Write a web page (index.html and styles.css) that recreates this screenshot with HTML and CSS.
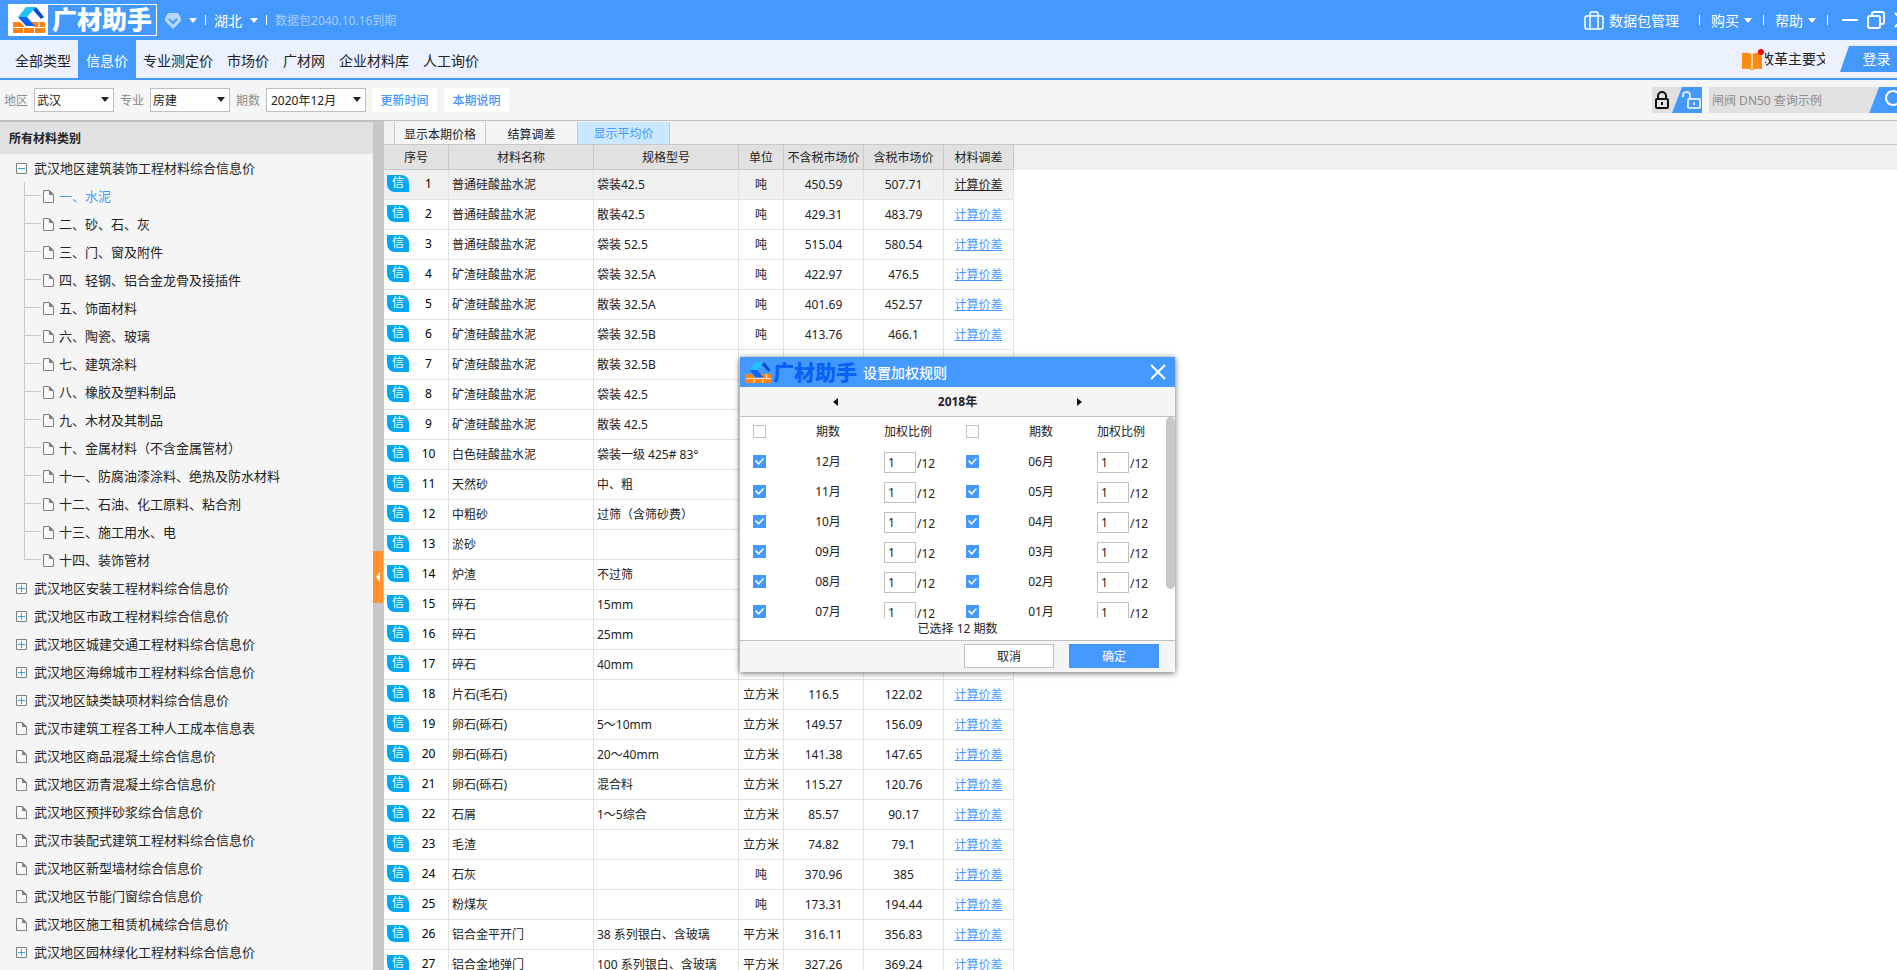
FILE: index.html
```html
<!DOCTYPE html>
<html lang="zh-CN">
<head>
<meta charset="utf-8">
<title>广材助手</title>
<link rel="stylesheet" href="styles.css">
</head>
<body>
<svg class="defs" width="0" height="0" aria-hidden="true">
  <symbol id="mark" viewBox="0 0 32 26">
    <path d="M0 15h7l5 5h9l-3-5h14v11H0z" fill="#ff8213"/>
    <path d="M0 20.500h32M10.500 21v5M21.500 21v5M26 15v5" stroke="#fff" stroke-width="1"/>
    <path d="M13 0h10l-9 10H5z" fill="#22c3fb"/>
    <path d="M5 10h9l8 9h-9z" fill="#0a62f5"/>
    <path d="M23 0l8 10-3 2-8-9z" fill="#0650c8"/>
  </symbol>
  <symbol id="file" viewBox="0 0 11 13">
    <path d="M.5.5h6l4 4v8H.5z" fill="#f8f8f8" stroke="#808080"/>
    <path d="M6.500.5v4h4z" fill="#808080" stroke="#808080"/>
  </symbol>
  <symbol id="plus" viewBox="0 0 11 11">
    <path d="M.5.5h10v10H.5z" fill="#fafafa" stroke="#808080"/>
    <path d="M2 5.500h7M5.500 2v7" stroke="#2ba7d8"/>
  </symbol>
  <symbol id="minus" viewBox="0 0 11 11">
    <path d="M.5.5h10v10H.5z" fill="#fafafa" stroke="#808080"/>
    <path d="M2 5.500h7" stroke="#2ba7d8"/>
  </symbol>
</svg>

<header class="titlebar">
  <div class="brand">
    <span class="brand-mark"><svg width="32" height="26"><use href="#mark"/></svg></span>
    <span class="brand-name">广材助手</span>
  </div>
  <button class="bar-btn" aria-label="会员"><svg width="16" height="16" viewBox="0 0 16 16"><path d="M3 0h10l3 5v3l-8 8-8-8V5z" fill="#b4d6ff"/><path d="M4 6l4 4 4-4" fill="none" stroke="#4499ff" stroke-width="2"/></svg><i class="caret"></i></button>
  <i class="bar-sep"></i>
  <button class="bar-btn">湖北<i class="caret"></i></button>
  <i class="bar-sep"></i>
  <span class="expiry">数据包2040.10.16到期</span>
  <div class="bar-right">
    <button class="bar-btn manage"><svg width="20" height="19" viewBox="0 0 20 19" fill="none" stroke="#fff" stroke-width="1.500"><rect x="1" y="5" width="18" height="13" rx="2"/><path d="M6 18V2.500Q6 1 7.500 1h5Q14 1 14 2.500V18"/></svg>数据包管理</button>
    <i class="bar-sep"></i>
    <button class="bar-btn">购买<i class="caret"></i></button>
    <i class="bar-sep"></i>
    <button class="bar-btn">帮助<i class="caret"></i></button>
    <i class="bar-sep"></i>
    <div class="window-btns">
      <button aria-label="最小化"><svg width="16" height="18" viewBox="0 0 16 18"><path d="M0 9h16" stroke="#fff" stroke-width="2"/></svg></button>
      <button aria-label="还原"><svg width="18" height="18" viewBox="0 0 18 18" fill="none" stroke="#fff" stroke-width="2"><rect x="1" y="5" width="12" height="12" rx="2"/><path d="M5 5V3q0-2 2-2h8q2 0 2 2v8q0 2-2 2h-2"/></svg></button>
      <button aria-label="关闭"><svg width="16" height="18" viewBox="0 0 16 18"><path d="M1 2l14 14M15 2L1 16" stroke="#fff" stroke-width="2"/></svg></button>
    </div>
  </div>
</header>

<nav class="nav">
  <a href="#">全部类型</a>
  <a href="#" class="active">信息价</a>
  <a href="#">专业测定价</a>
  <a href="#">市场价</a>
  <a href="#">广材网</a>
  <a href="#">企业材料库</a>
  <a href="#">人工询价</a>
  <div class="nav-right">
    <a href="#" class="news"><svg width="23" height="21" viewBox="0 0 23 21"><path d="M0 4q5-1 10 1 5-2 10-1v16q-5-1-10 1-5-2-10-1z" fill="#ff8a10"/><path d="M10 5v15" stroke="#ffd9ae" stroke-width="2"/><circle cx="19" cy="3" r="3" fill="#f00"/></svg><span class="news-text">改革主要文</span></a>
    <button class="login">登录</button>
  </div>
</nav>

<div class="filters">
  <label for="area">地区</label>
  <span class="pick"><select id="area"><option>武汉</option></select></span>
  <label for="major">专业</label>
  <span class="pick"><select id="major"><option>房建</option></select></span>
  <label for="period">期数</label>
  <span class="pick wide"><select id="period"><option>2020年12月</option></select></span>
  <button class="filter-btn">更新时间</button>
  <button class="filter-btn">本期说明</button>
  <div class="search-area">
    <div class="locks">
      <button aria-label="锁定"><svg width="16" height="18" viewBox="0 0 16 18" fill="none" stroke="#111" stroke-width="2"><rect x="2" y="8" width="12" height="9" rx="1"/><path d="M4 8V5a4 4 0 0 1 8 0v3M8 11v3"/></svg></button>
      <button class="unlock" aria-label="解锁"><svg width="19" height="18" viewBox="0 0 19 18" fill="none" stroke="#d8e9ff" stroke-width="2"><rect x="6" y="8" width="12" height="9" rx="1"/><path d="M1 6V4a3.500 3 0 0 1 7 0v4M12 11v3"/></svg></button>
    </div>
    <input class="search" type="text" placeholder="闸阀 DN50 查询示例" aria-label="搜索">
    <button class="search-btn" aria-label="查询"><svg width="20" height="20" viewBox="0 0 20 20" fill="none" stroke="#fff" stroke-width="2"><circle cx="8" cy="8" r="7"/><path d="M13 13l6 6"/></svg></button>
  </div>
</div>

<main class="workspace">
  <aside class="sidebar">
    <h2>所有材料类别</h2>
    <ul class="tree">
      <li><a href="#"><svg width="11" height="11"><use href="#minus"/></svg>武汉地区建筑装饰工程材料综合信息价</a>
        <ul class="branch">
          <li><a href="#" class="current"><svg width="11" height="13"><use href="#file"/></svg>一、水泥</a></li>
          <li><a href="#"><svg width="11" height="13"><use href="#file"/></svg>二、砂、石、灰</a></li>
          <li><a href="#"><svg width="11" height="13"><use href="#file"/></svg>三、门、窗及附件</a></li>
          <li><a href="#"><svg width="11" height="13"><use href="#file"/></svg>四、轻钢、铝合金龙骨及接插件</a></li>
          <li><a href="#"><svg width="11" height="13"><use href="#file"/></svg>五、饰面材料</a></li>
          <li><a href="#"><svg width="11" height="13"><use href="#file"/></svg>六、陶瓷、玻璃</a></li>
          <li><a href="#"><svg width="11" height="13"><use href="#file"/></svg>七、建筑涂料</a></li>
          <li><a href="#"><svg width="11" height="13"><use href="#file"/></svg>八、橡胶及塑料制品</a></li>
          <li><a href="#"><svg width="11" height="13"><use href="#file"/></svg>九、木材及其制品</a></li>
          <li><a href="#"><svg width="11" height="13"><use href="#file"/></svg>十、金属材料（不含金属管材）</a></li>
          <li><a href="#"><svg width="11" height="13"><use href="#file"/></svg>十一、防腐油漆涂料、绝热及防水材料</a></li>
          <li><a href="#"><svg width="11" height="13"><use href="#file"/></svg>十二、石油、化工原料、粘合剂</a></li>
          <li><a href="#"><svg width="11" height="13"><use href="#file"/></svg>十三、施工用水、电</a></li>
          <li><a href="#"><svg width="11" height="13"><use href="#file"/></svg>十四、装饰管材</a></li>
        </ul>
      </li>
      <li><a href="#"><svg width="11" height="11"><use href="#plus"/></svg>武汉地区安装工程材料综合信息价</a></li>
      <li><a href="#"><svg width="11" height="11"><use href="#plus"/></svg>武汉地区市政工程材料综合信息价</a></li>
      <li><a href="#"><svg width="11" height="11"><use href="#plus"/></svg>武汉地区城建交通工程材料综合信息价</a></li>
      <li><a href="#"><svg width="11" height="11"><use href="#plus"/></svg>武汉地区海绵城市工程材料综合信息价</a></li>
      <li><a href="#"><svg width="11" height="11"><use href="#plus"/></svg>武汉地区缺类缺项材料综合信息价</a></li>
      <li><a href="#"><svg width="11" height="13"><use href="#file"/></svg>武汉市建筑工程各工种人工成本信息表</a></li>
      <li><a href="#"><svg width="11" height="13"><use href="#file"/></svg>武汉地区商品混凝土综合信息价</a></li>
      <li><a href="#"><svg width="11" height="13"><use href="#file"/></svg>武汉地区沥青混凝土综合信息价</a></li>
      <li><a href="#"><svg width="11" height="13"><use href="#file"/></svg>武汉地区预拌砂浆综合信息价</a></li>
      <li><a href="#"><svg width="11" height="13"><use href="#file"/></svg>武汉市装配式建筑工程材料综合信息价</a></li>
      <li><a href="#"><svg width="11" height="13"><use href="#file"/></svg>武汉地区新型墙材综合信息价</a></li>
      <li><a href="#"><svg width="11" height="13"><use href="#file"/></svg>武汉地区节能门窗综合信息价</a></li>
      <li><a href="#"><svg width="11" height="13"><use href="#file"/></svg>武汉地区施工租赁机械综合信息价</a></li>
      <li><a href="#"><svg width="11" height="11"><use href="#plus"/></svg>武汉地区园林绿化工程材料综合信息价</a></li>
    </ul>
  </aside>
  <div class="splitter"><button class="collapse" aria-label="收起"></button></div>

  <section class="content">
    <div class="tabs">
      <button>显示本期价格</button>
      <button>结算调差</button>
      <button class="active">显示平均价</button>
    </div>
    <div class="grid-area">
    <table class="prices">
      <colgroup><col class="c-no"><col class="c-name"><col class="c-spec"><col class="c-unit"><col class="c-price"><col class="c-price"><col class="c-diff"></colgroup>
      <thead><tr><th>序号</th><th>材料名称</th><th>规格型号</th><th>单位</th><th>不含税市场价</th><th>含税市场价</th><th>材料调差</th></tr></thead>
      <tbody>
        <tr class="selected"><td><div class="no"><b>信</b><span>1</span></div></td><td>普通硅酸盐水泥</td><td>袋装42.5</td><td>吨</td><td>450.59</td><td>507.71</td><td><a href="#">计算价差</a></td></tr>
        <tr><td><div class="no"><b>信</b><span>2</span></div></td><td>普通硅酸盐水泥</td><td>散装42.5</td><td>吨</td><td>429.31</td><td>483.79</td><td><a href="#">计算价差</a></td></tr>
        <tr><td><div class="no"><b>信</b><span>3</span></div></td><td>普通硅酸盐水泥</td><td>袋装 52.5</td><td>吨</td><td>515.04</td><td>580.54</td><td><a href="#">计算价差</a></td></tr>
        <tr><td><div class="no"><b>信</b><span>4</span></div></td><td>矿渣硅酸盐水泥</td><td>袋装 32.5A</td><td>吨</td><td>422.97</td><td>476.5</td><td><a href="#">计算价差</a></td></tr>
        <tr><td><div class="no"><b>信</b><span>5</span></div></td><td>矿渣硅酸盐水泥</td><td>散装 32.5A</td><td>吨</td><td>401.69</td><td>452.57</td><td><a href="#">计算价差</a></td></tr>
        <tr><td><div class="no"><b>信</b><span>6</span></div></td><td>矿渣硅酸盐水泥</td><td>袋装 32.5B</td><td>吨</td><td>413.76</td><td>466.1</td><td><a href="#">计算价差</a></td></tr>
        <tr><td><div class="no"><b>信</b><span>7</span></div></td><td>矿渣硅酸盐水泥</td><td>散装 32.5B</td><td></td><td></td><td></td><td></td></tr>
        <tr><td><div class="no"><b>信</b><span>8</span></div></td><td>矿渣硅酸盐水泥</td><td>袋装 42.5</td><td></td><td></td><td></td><td></td></tr>
        <tr><td><div class="no"><b>信</b><span>9</span></div></td><td>矿渣硅酸盐水泥</td><td>散装 42.5</td><td></td><td></td><td></td><td></td></tr>
        <tr><td><div class="no"><b>信</b><span>10</span></div></td><td>白色硅酸盐水泥</td><td>袋装一级 425# 83°</td><td></td><td></td><td></td><td></td></tr>
        <tr><td><div class="no"><b>信</b><span>11</span></div></td><td>天然砂</td><td>中、粗</td><td></td><td></td><td></td><td></td></tr>
        <tr><td><div class="no"><b>信</b><span>12</span></div></td><td>中粗砂</td><td>过筛（含筛砂费）</td><td></td><td></td><td></td><td></td></tr>
        <tr><td><div class="no"><b>信</b><span>13</span></div></td><td>淤砂</td><td></td><td></td><td></td><td></td><td></td></tr>
        <tr><td><div class="no"><b>信</b><span>14</span></div></td><td>炉渣</td><td>不过筛</td><td></td><td></td><td></td><td></td></tr>
        <tr><td><div class="no"><b>信</b><span>15</span></div></td><td>碎石</td><td>15mm</td><td></td><td></td><td></td><td></td></tr>
        <tr><td><div class="no"><b>信</b><span>16</span></div></td><td>碎石</td><td>25mm</td><td></td><td></td><td></td><td></td></tr>
        <tr><td><div class="no"><b>信</b><span>17</span></div></td><td>碎石</td><td>40mm</td><td></td><td></td><td></td><td></td></tr>
        <tr><td><div class="no"><b>信</b><span>18</span></div></td><td>片石(毛石)</td><td></td><td>立方米</td><td>116.5</td><td>122.02</td><td><a href="#">计算价差</a></td></tr>
        <tr><td><div class="no"><b>信</b><span>19</span></div></td><td>卵石(砾石)</td><td>5～10mm</td><td>立方米</td><td>149.57</td><td>156.09</td><td><a href="#">计算价差</a></td></tr>
        <tr><td><div class="no"><b>信</b><span>20</span></div></td><td>卵石(砾石)</td><td>20～40mm</td><td>立方米</td><td>141.38</td><td>147.65</td><td><a href="#">计算价差</a></td></tr>
        <tr><td><div class="no"><b>信</b><span>21</span></div></td><td>卵石(砾石)</td><td>混合料</td><td>立方米</td><td>115.27</td><td>120.76</td><td><a href="#">计算价差</a></td></tr>
        <tr><td><div class="no"><b>信</b><span>22</span></div></td><td>石屑</td><td>1～5综合</td><td>立方米</td><td>85.57</td><td>90.17</td><td><a href="#">计算价差</a></td></tr>
        <tr><td><div class="no"><b>信</b><span>23</span></div></td><td>毛渣</td><td></td><td>立方米</td><td>74.82</td><td>79.1</td><td><a href="#">计算价差</a></td></tr>
        <tr><td><div class="no"><b>信</b><span>24</span></div></td><td>石灰</td><td></td><td>吨</td><td>370.96</td><td>385</td><td><a href="#">计算价差</a></td></tr>
        <tr><td><div class="no"><b>信</b><span>25</span></div></td><td>粉煤灰</td><td></td><td>吨</td><td>173.31</td><td>194.44</td><td><a href="#">计算价差</a></td></tr>
        <tr><td><div class="no"><b>信</b><span>26</span></div></td><td>铝合金平开门</td><td>38 系列银白、含玻璃</td><td>平方米</td><td>316.11</td><td>356.83</td><td><a href="#">计算价差</a></td></tr>
        <tr><td><div class="no"><b>信</b><span>27</span></div></td><td>铝合金地弹门</td><td>100 系列银白、含玻璃</td><td>平方米</td><td>327.26</td><td>369.24</td><td><a href="#">计算价差</a></td></tr>
      </tbody>
    </table>
    </div>
  </section>
</main>

<div class="dialog" role="dialog" aria-labelledby="dlg-title">
  <div class="dlg-head">
    <svg width="27" height="21"><use href="#mark"/></svg>
    <span class="dlg-brand">广材助手</span>
    <span id="dlg-title" class="dlg-title">设置加权规则</span>
    <button class="dlg-close" aria-label="关闭"><svg width="16" height="16" viewBox="0 0 16 16"><path d="M1 1l14 14M15 1L1 15" stroke="#fff" stroke-width="2"/></svg></button>
  </div>
  <div class="dlg-year">
    <button class="prev" aria-label="上一年"></button>
    <strong>2018年</strong>
    <button class="next" aria-label="下一年"></button>
  </div>
  <div class="dlg-body">
    <table class="weights">
      <colgroup><col class="w-check"><col class="w-period"><col class="w-ratio"><col class="w-check"><col class="w-period"><col class="w-ratio"></colgroup>
      <tr><th><input type="checkbox" aria-label="全选左列"></th><th>期数</th><th>加权比例</th><th><input type="checkbox" aria-label="全选右列"></th><th>期数</th><th>加权比例</th></tr>
      <tr><td><input type="checkbox" id="m12" checked></td><td><label for="m12">12月</label></td><td><input type="text" value="1" aria-label="12月比例">/12</td><td><input type="checkbox" id="m06" checked></td><td><label for="m06">06月</label></td><td><input type="text" value="1" aria-label="06月比例">/12</td></tr>
      <tr><td><input type="checkbox" id="m11" checked></td><td><label for="m11">11月</label></td><td><input type="text" value="1" aria-label="11月比例">/12</td><td><input type="checkbox" id="m05" checked></td><td><label for="m05">05月</label></td><td><input type="text" value="1" aria-label="05月比例">/12</td></tr>
      <tr><td><input type="checkbox" id="m10" checked></td><td><label for="m10">10月</label></td><td><input type="text" value="1" aria-label="10月比例">/12</td><td><input type="checkbox" id="m04" checked></td><td><label for="m04">04月</label></td><td><input type="text" value="1" aria-label="04月比例">/12</td></tr>
      <tr><td><input type="checkbox" id="m09" checked></td><td><label for="m09">09月</label></td><td><input type="text" value="1" aria-label="09月比例">/12</td><td><input type="checkbox" id="m03" checked></td><td><label for="m03">03月</label></td><td><input type="text" value="1" aria-label="03月比例">/12</td></tr>
      <tr><td><input type="checkbox" id="m08" checked></td><td><label for="m08">08月</label></td><td><input type="text" value="1" aria-label="08月比例">/12</td><td><input type="checkbox" id="m02" checked></td><td><label for="m02">02月</label></td><td><input type="text" value="1" aria-label="02月比例">/12</td></tr>
      <tr><td><input type="checkbox" id="m07" checked></td><td><label for="m07">07月</label></td><td><input type="text" value="1" aria-label="07月比例">/12</td><td><input type="checkbox" id="m01" checked></td><td><label for="m01">01月</label></td><td><input type="text" value="1" aria-label="01月比例">/12</td></tr>
    </table>
    <div class="scroll-thumb"></div>
  </div>
  <p class="dlg-status">已选择 12 期数</p>
  <div class="dlg-foot">
    <button class="cancel">取消</button>
    <button class="confirm">确定</button>
  </div>
</div>
</body>
</html>
```
FILE: styles.css
```css
* { box-sizing: border-box; }
body {
  margin: 0;
  height: 100vh;
  display: flex;
  flex-direction: column;
  overflow: hidden;
  background: #fff;
  color: #222;
  font: 12px/16px "Noto Sans", "Noto Sans CJK SC", sans-serif;
}
button, input, select { font: inherit; color: inherit; }
button { padding: 0; border: 0; background: none; }
a { color: inherit; text-decoration: none; }
ul { margin: 0; padding: 0; list-style: none; }
svg { flex: none; }
.defs { position: absolute; }

/* title bar */
.titlebar {
  flex: none;
  display: flex;
  align-items: center;
  gap: 8px;
  height: 40px;
  padding-left: 8px;
  background: #4499ff;
  color: #fff;
  font-size: 14px;
  white-space: nowrap;
}
.brand {
  display: flex;
  height: 32px;
  border: 1px solid #fff;
}
.brand-mark {
  display: flex;
  align-items: center;
  justify-content: center;
  width: 39px;
  background: #fff;
}
.brand-name {
  padding: 0 4px;
  font-size: 25px;
  font-weight: 900;
  line-height: 28px;
}
.bar-btn { display: flex; align-items: center; gap: 8px; line-height: 20px; padding-top: 1px; }
.caret {
  border: 4px solid transparent;
  border-top: 5px solid #fff;
  border-bottom: 0;
}
.bar-sep { width: 1px; height: 10px; background: #fff; }
.expiry { padding-top: 1px; color: #a6ceff; font-size: 12px; }
.bar-right {
  display: flex;
  align-items: center;
  gap: 11px;
  margin: 0 -13px 0 auto;
}
.bar-right .bar-btn { gap: 5px; }
.bar-right .manage { margin-right: 9px; }
.window-btns { display: flex; gap: 9px; margin-left: 3px; }
.window-btns button { display: flex; }

/* main navigation */
.nav {
  flex: none;
  display: flex;
  height: 40px;
  padding-left: 8px;
  border-bottom: 2px solid #4499ff;
  background: #ebf1ff;
  font-size: 14px;
  line-height: 42px;
  white-space: nowrap;
}
.nav > a { padding: 0 7px; }
.nav > a.active { padding: 0 8px; background: #4499ff; color: #fff; }
.nav-right { display: flex; align-items: center; gap: 15px; margin-left: auto; }
.news { display: flex; align-items: center; }
.news-text {
  display: flex;
  justify-content: center;
  width: 60px;
  overflow: hidden;
}
.login {
  height: 26px;
  width: 57px;
  padding-left: 16px;
  background: #4499ff;
  clip-path: polygon(9px 0, 100% 0, 100% 100%, 0 100%);
  color: #fff;
  line-height: 26px;
}

/* filters */
.filters {
  flex: none;
  display: flex;
  align-items: center;
  height: 41px;
  padding-left: 4px;
  border-bottom: 1px solid #bfbfbf;
  background: #f5f5f5;
  white-space: nowrap;
}
.filters label { width: 30px; padding-top: 2px; color: #8c8c8c; }
.pick { position: relative; width: 80px; margin-right: 6px; }
.pick.wide { width: 100px; }
.pick select {
  display: block;
  width: 100%;
  height: 24px;
  padding: 2px 2px 0;
  border: 1px solid #bfbfbf;
  border-radius: 0;
  background: #fff;
  appearance: none;
}
.pick.wide select { padding-left: 4px; }
.pick::after {
  content: "";
  position: absolute;
  top: 9px;
  right: 5px;
  border: 4px solid transparent;
  border-top: 5px solid #222;
  border-bottom: 0;
}
.filter-btn {
  width: 65px;
  height: 24px;
  margin-right: 7px;
  padding-top: 2px;
  background: #fff;
  color: #4499ff;
  font-weight: 500;
}
.search-area { display: flex; height: 26px; margin-left: auto; }
.locks { display: flex; width: 50px; margin-right: 7px; background: #e1e1e1; }
.locks button { display: flex; align-items: center; justify-content: flex-end; width: 20px; padding-right: 2px; }
.locks .unlock {
  width: 30px;
  padding-right: 1px;
  background: #4499ff;
  clip-path: polygon(10px 0, 100% 0, 100% 100%, 0 100%);
}
.search { width: 160px; padding: 2px 3px 0; border: 0; background: #e1e1e1; }
.search::placeholder { color: #8c8c8c; opacity: 1; }
.search-btn {
  display: flex;
  align-items: center;
  width: 28px;
  padding-left: 16px;
  overflow: hidden;
  background: linear-gradient(111deg, #e1e1e1 9px, #4499ff 10px);
}

/* workspace */
.workspace { flex: 1; display: flex; min-height: 0; }
.sidebar { flex: none; width: 373px; overflow: hidden; background: #f5f5f5; }
.sidebar h2 {
  height: 33px;
  margin: 0;
  padding-left: 9px;
  border-top: 1px solid #bfbfbf;
  background: #e1e1e1;
  font-size: 12px;
  line-height: 34px;
}
.tree { font-size: 13px; line-height: 28px; white-space: nowrap; }
.tree a { display: flex; align-items: center; gap: 7px; height: 28px; padding-left: 16px; }
.branch { padding-left: 24px; }
.branch li {
  padding-left: 19px;
  background:
    linear-gradient(#c8c8c8, #c8c8c8) 0 0 / 1px 100% no-repeat,
    linear-gradient(#c8c8c8, #c8c8c8) 0 13px / 17px 1px no-repeat;
}
.branch li:last-child {
  background:
    linear-gradient(#c8c8c8, #c8c8c8) 0 0 / 1px 14px no-repeat,
    linear-gradient(#c8c8c8, #c8c8c8) 0 13px / 17px 1px no-repeat;
}
.branch a { gap: 5px; padding-left: 0; }
.current { color: #4499ff; }
.splitter { position: relative; flex: none; width: 11px; background: #c8c7c6; }
.collapse {
  position: absolute;
  top: calc(50% + 5px);
  left: 0;
  width: 10px;
  height: 52px;
  padding-left: 3px;
  background: #ff9130;
}
.collapse::before {
  content: "";
  display: block;
  width: 0;
  border: 5px solid transparent;
  border-right: 4px solid #fff;
  border-left: 0;
}

/* price list */
.content { flex: 1; min-width: 0; overflow: hidden; }
.tabs {
  display: flex;
  height: 24px;
  padding: 1px 0 0 10px;
  border-bottom: 1px solid #c8c8c8;
  background: #f2f2f2;
}
.tabs button { width: 92px; padding-top: 3px; border-right: 1px solid #c8c8c8; background: #f5f5f5; }
.tabs button:first-child { border-left: 1px solid #c8c8c8; }
.tabs .active { padding-top: 1px; background: #cce8ff; color: #4499ff; }
.grid-area { background: linear-gradient(#f0f0f0, #f0f0f0) 0 0 / 100% 25px no-repeat; }
.prices { width: 630px; table-layout: fixed; border-collapse: separate; border-spacing: 0; text-align: center; }
.c-no { width: 65px; }
.c-name, .c-spec { width: 145px; }
.c-unit { width: 45px; }
.c-price { width: 80px; }
.c-diff { width: 70px; }
.prices th {
  height: 25px;
  padding: 2px 0 0;
  border-right: 1px solid #c8c8c8;
  border-bottom: 1px solid #c8c8c8;
  background: #e1e1e1;
  font-weight: 400;
  white-space: nowrap;
}
.prices td {
  height: 30px;
  padding: 0 3px;
  border-right: 1px solid #e1e1e1;
  border-bottom: 1px solid #e1e1e1;
  white-space: nowrap;
}
.prices td:nth-child(2), .prices td:nth-child(3) { text-align: left; }
.prices a { color: #4499ff; text-decoration: underline; }
.prices .selected td { background: #f0f0f0; }
.prices .selected a { color: #222; }
.no { display: flex; align-items: center; padding-bottom: 2px; color: #000; }
.no b {
  width: 22px;
  height: 17px;
  border-radius: 0 8px 0 8px;
  background: #00a8f3;
  color: #fff;
  font-weight: 400;
  line-height: 16px;
}
.no span { flex: 1; padding-left: 3px; }

/* weighting dialog */
.dialog {
  position: absolute;
  top: 357px;
  left: 740px;
  width: 435px;
  background: #fff;
  box-shadow: 0 1px 6px rgba(0, 0, 0, .6);
}
.dlg-head {
  display: flex;
  align-items: center;
  height: 30px;
  padding: 0 9px 0 5px;
  background: #4499ff;
  color: #fff;
}
.dlg-brand { margin-left: 1px; color: #0a62f5; font-size: 21px; font-weight: 900; line-height: 28px; }
.dlg-title { margin-left: 6px; padding-top: 2px; font-size: 14px; font-weight: 500; }
.dlg-close { display: flex; margin-left: auto; }
.dlg-year {
  display: flex;
  align-items: center;
  justify-content: space-between;
  height: 30px;
  padding: 0 93px;
  border-bottom: 1px solid #bfbfbf;
  background: #f5f5f5;
}
.prev, .next { border: 4px solid transparent; }
.prev { border-right: 5px solid #111; border-left: 0; }
.next { border-left: 5px solid #111; border-right: 0; }
.dlg-body { display: flex; justify-content: space-between; height: 201px; overflow: hidden; }
.weights { width: 426px; height: 210px; table-layout: fixed; border-collapse: collapse; text-align: center; }
.w-check { width: 39px; }
.w-period { width: 98px; }
.w-ratio { width: 76px; }
.weights th, .weights td { height: 30px; padding: 0; font-weight: 400; white-space: nowrap; }
.weights th:nth-child(3n), .weights td:nth-child(3n) { padding-left: 7px; text-align: left; }
.weights input[type="text"] {
  width: 32px;
  height: 21px;
  margin: 0 1px 0 0;
  padding: 0 3px;
  border: 1px solid #bfbfbf;
  vertical-align: 1px;
}
.weights input[type="checkbox"] {
  display: block;
  width: 13px;
  height: 13px;
  margin: 0 auto 1px;
  border: 1px solid #bfbfbf;
  background: #fff;
  appearance: none;
}
.weights input:checked { border-color: #4499ff; background: #4499ff; }
.weights input:checked::before {
  content: "";
  display: block;
  width: 9px;
  height: 7px;
  margin: 2px 0 0 1px;
  background: #fff;
  clip-path: polygon(0 45%, 12% 28%, 40% 68%, 88% 0, 100% 16%, 40% 100%);
}
.scroll-thumb { width: 9px; height: 172px; border-radius: 5px; background: #c8c8c8; }
.dlg-status { margin: 0; height: 22px; line-height: 22px; text-align: center; }
.dlg-foot {
  display: flex;
  justify-content: flex-end;
  gap: 15px;
  padding: 3px 16px 4px;
  border-top: 1px solid #bfbfbf;
  background: #f5f5f5;
}
.dlg-foot button { width: 90px; height: 24px; padding-top: 1px; }
.cancel { border: 1px solid #bfbfbf; background: #fff; }
.confirm { background: #4499ff; color: #fff; }
```
